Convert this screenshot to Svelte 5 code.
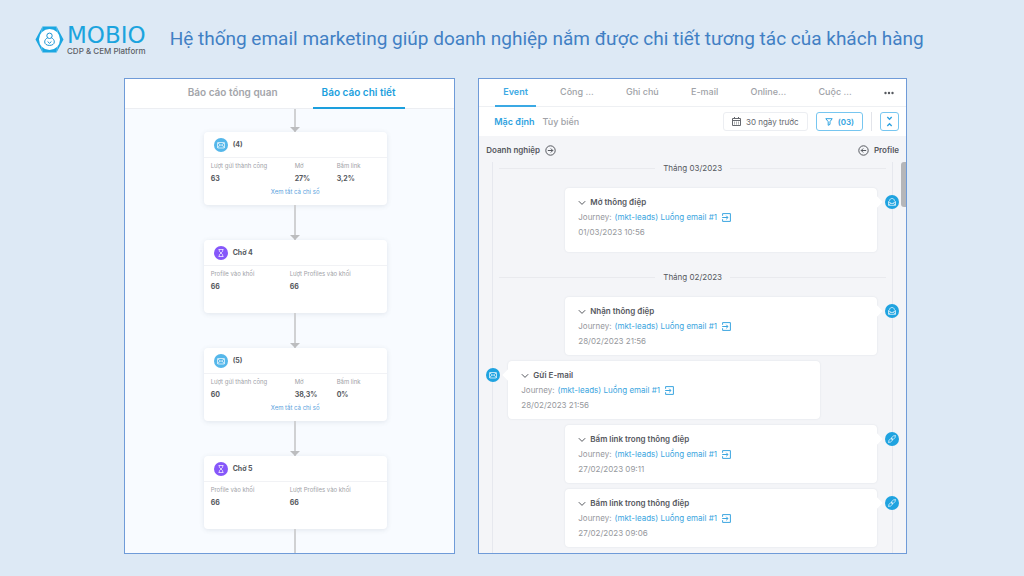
<script>
  const steps = [
    {
      kind: 'mail',
      name: '(4)',
      stats: [
        { label: 'Lượt gửi thành công', value: '63' },
        { label: 'Mở', value: '27%' },
        { label: 'Bấm link', value: '3,2%' },
      ],
    },
    {
      kind: 'wait',
      name: 'Chờ 4',
      stats: [
        { label: 'Profile vào khối', value: '66' },
        { label: 'Lượt Profiles vào khối', value: '66' },
      ],
    },
    {
      kind: 'mail',
      name: '(5)',
      stats: [
        { label: 'Lượt gửi thành công', value: '60' },
        { label: 'Mở', value: '38,3%' },
        { label: 'Bấm link', value: '0%' },
      ],
    },
    {
      kind: 'wait',
      name: 'Chờ 5',
      stats: [
        { label: 'Profile vào khối', value: '66' },
        { label: 'Lượt Profiles vào khối', value: '66' },
      ],
    },
  ];

  const reportTabs = ['Báo cáo tổng quan', 'Báo cáo chi tiết'];
  const profileTabs = ['Event', 'Công ...', 'Ghi chú', 'E-mail', 'Online...', 'Cuộc ...'];

  const journey = '(mkt-leads) Luồng email #1';

  const months = [
    {
      label: 'Tháng 03/2023',
      events: [
        { title: 'Mở thông điệp', time: '01/03/2023 10:56', side: 'profile', icon: 'open', tall: true },
      ],
    },
    {
      label: 'Tháng 02/2023',
      events: [
        { title: 'Nhận thông điệp', time: '28/02/2023 21:56', side: 'profile', icon: 'open' },
        { title: 'Gửi E-mail', time: '28/02/2023 21:56', side: 'business', icon: 'mail' },
        { title: 'Bấm link trong thông điệp', time: '27/02/2023 09:11', side: 'profile', icon: 'link' },
        { title: 'Bấm link trong thông điệp', time: '27/02/2023 09:06', side: 'profile', icon: 'link' },
      ],
    },
  ];

  let reportTab = $state('Báo cáo chi tiết');
  let profileTab = $state('Event');
  let view = $state('Mặc định');
</script>

{#snippet glyph(name)}
  <svg class="glyph" viewBox="0 0 14 14" aria-hidden="true">
    {#if name === 'mail'}
      <rect x="3.5" y="4.5" width="7" height="5.5" rx="0.6" />
      <path d="M3.7 4.8 7 7.5l3.3-2.7M3.7 9.8l2.2-2.9M10.3 9.8 8.1 6.9" />
    {:else if name === 'wait'}
      <path d="M4.5 3.5h5M4.5 10.5h5M5.3 3.5v1.7L7 7 5.3 8.8v1.7M8.7 3.5v1.7L7 7l1.7 1.8v1.7" />
    {:else if name === 'open'}
      <path d="M3.5 10.3V6.8L4.6 5.5C4.8 4.2 5.7 3.5 7 3.5s2.2.7 2.4 2l1.100 1.300v3.500zM3.600 6.900 7 8.700l3.400-1.800M3.700 10.100l2-2M10.300 10.100l-2-2" />
    {:else}
      <path d="M6.6 5.7 8.4 4a1.100 1.100 0 0 1 1.600 1.600L8.300 7.400a1.100 1.100 0 0 1-1.600 0zM7.400 8.300 5.600 10A1.100 1.100 0 0 1 4 8.400l1.700-1.800a1.100 1.100 0 0 1 1.600 0zM9.900 4.100l.9-.9M4.100 9.900l-.9.9" />
    {/if}
  </svg>
{/snippet}

<div class="page">
  <header>
    <div class="brand">
      <svg class="brand-mark" viewBox="0 0 29 27" aria-hidden="true">
        <path d="M7.5.5h14l7 13-7 13h-14l-7-13z" fill="#1ba7e2" />
        <path d="M7.5.5 5 13.500l2.500 13M21.500.5 24 13.500l-2.500 13" fill="none" stroke="#8fd2f1" stroke-width="0.6" />
        <circle cx="14.5" cy="13.5" r="10.5" fill="#fff" />
        <circle cx="14.5" cy="9.8" r="2.7" fill="none" stroke="#1b93d2" />
        <path d="M12.600 11.800c-1.900.9-2.900 2.400-2.900 4.100 0 2.200 2 3.500 4.800 3.500s4.800-1.300 4.800-3.500c0-1.700-1-3.200-2.900-4.100M12.600 15.500l1.900 1.800 1.900-1.800" fill="none" stroke="#1b93d2" />
      </svg>
      <div class="brand-text">
        <span class="brand-name">MOBIO</span>
        <span class="brand-sub">CDP &amp; CEM Platform</span>
      </div>
    </div>
    <h1>Hệ thống email marketing giúp doanh nghiệp nắm được chi tiết tương tác của khách hàng</h1>
  </header>

  <main>
    <section class="panel report">
      <nav class="report-tabs">
        {#each reportTabs as tab}
          <button class:active={reportTab === tab} onclick={() => (reportTab = tab)}>{tab}</button>
        {/each}
      </nav>

      <div class="flow">
        {#each steps as step}
          <div class="arrow"></div>
          <article class="step">
            <div class="step-head">
              <span class="dot {step.kind}">{@render glyph(step.kind)}</span>
              <strong>{step.name}</strong>
            </div>
            <dl class="stats {step.kind}">
              {#each step.stats as stat}
                <div>
                  <dt>{stat.label}</dt>
                  <dd>{stat.value}</dd>
                </div>
              {/each}
            </dl>
            {#if step.kind === 'mail'}
              <a class="all-stats" href="#stats">Xem tất cả chỉ số</a>
            {/if}
          </article>
        {/each}
        <div class="tail"></div>
      </div>
    </section>

    <section class="panel profile">
      <nav class="profile-tabs">
        {#each profileTabs as tab}
          <button class:active={profileTab === tab} onclick={() => (profileTab = tab)}>{tab}</button>
        {/each}
        <button class="more" aria-label="Thêm">
          <svg width="10" height="4" viewBox="0 0 10 4"><circle cx="1.5" cy="2" r="1.2" /><circle cx="5" cy="2" r="1.2" /><circle cx="8.5" cy="2" r="1.2" /></svg>
        </button>
      </nav>

      <div class="toolbar">
        {#each ['Mặc định', 'Tùy biến'] as v}
          <button class="view" class:active={view === v} onclick={() => (view = v)}>{v}</button>
        {/each}
        <button class="date">
          <svg width="9" height="9" viewBox="0 0 9 9" aria-hidden="true"><path d="M.5 1.5h8v7h-8zM.5 3.5h8M2.5 0v2M6.5 0v2" /><path stroke-dasharray="1 1" stroke-width="0.8" d="M2 5.2h5M2 6.9h5" /></svg>
          30 ngày trước
        </button>
        <button class="filter">
          <svg width="8" height="8" viewBox="0 0 8 8" aria-hidden="true"><path d="M.8.7h6.400L5 3.700v2.700L3.200 7.300V3.700z" /></svg>
          (03)
        </button>
        <span class="divider"></span>
        <button class="collapse" aria-label="Thu gọn">
          <svg width="7" height="11" viewBox="0 0 7 11"><path d="M1.300 1 3.500 3.200 5.700 1M1.300 10l2.200-2.200L5.700 10" /></svg>
        </button>
      </div>

      <div class="history">
        <div class="sides">
          <span>
            Doanh nghiệp
            <svg width="11" height="11" viewBox="0 0 11 11" aria-hidden="true"><circle cx="5.5" cy="5.5" r="4.7" /><path d="M2.800 5.500h5M5.800 3.500l2 2-2 2" /></svg>
          </span>
          <span>
            <svg width="11" height="11" viewBox="0 0 11 11" aria-hidden="true"><circle cx="5.5" cy="5.5" r="4.7" /><path d="M8.200 5.500h-5M5.200 3.500l-2 2 2 2" /></svg>
            Profile
          </span>
        </div>

        <div class="timeline">
          {#each months as month}
            <h2>{month.label}</h2>
            {#each month.events as event}
              <div class="event {event.side}">
                <article class:tall={event.tall}>
                  <h3>
                    <svg width="8" height="6" viewBox="0 0 8 6" aria-hidden="true"><path d="M.8 1.200 4 4.400l3.200-3.200" /></svg>
                    {event.title}
                  </h3>
                  <p>
                    Journey: <a href="#journey">{journey}<svg width="9" height="9" viewBox="0 0 9 9" aria-hidden="true"><path d="M.6 2.800V.6h7.800v7.800H.6V6.200M.2 4.500h5.600M4.200 2.700 6 4.500 4.200 6.300" /></svg></a>
                  </p>
                  <time>{event.time}</time>
                </article>
                <span class="dot {event.icon}">{@render glyph(event.icon)}</span>
              </div>
            {/each}
          {/each}
        </div>
        <div class="scrollbar"></div>
      </div>
    </section>
  </main>
</div>

<style>
  :global(body) {
    margin: 0;
    background: #dde9f5;
  }

  .page {
    min-height: 100vh;
    box-sizing: border-box;
    display: flex;
    flex-direction: column;
    padding-bottom: 22px;
    font-family: Inter, 'Noto Sans', sans-serif;
    color: #55585e;
  }

  button {
    padding: 0;
    border: 0;
    background: none;
    font: inherit;
    color: inherit;
    white-space: nowrap;
    cursor: pointer;
  }

  a {
    color: #3ba5e0;
    text-decoration: none;
  }

  h1, h2, h3, p, dl, dd {
    margin: 0;
    font-weight: inherit;
  }

  svg {
    flex: none;
    fill: none;
    stroke: currentColor;
  }

  header {
    display: flex;
    align-items: center;
    gap: 24px;
    height: 78px;
    padding: 0 35px;
  }

  .brand {
    display: flex;
    align-items: center;
    gap: 3px;
  }

  .brand-mark {
    width: 29px;
    height: 27px;
    stroke: none;
  }

  .brand-text {
    display: flex;
    flex-direction: column;
  }

  .brand-name {
    font-family: 'DejaVu Sans', sans-serif;
    font-size: 23px;
    line-height: 23px;
    color: #1ba4de;
  }

  .brand-sub {
    font-size: 8px;
    line-height: 8px;
    font-weight: 500;
    color: #5c5f66;
  }

  h1 {
    font-family: Roboto, sans-serif;
    font-size: 19px;
    line-height: 24px;
    color: #4180c4;
    white-space: nowrap;
  }

  main {
    flex: 1;
    display: flex;
    gap: 23px;
    padding: 0 117px 0 124px;
  }

  .panel {
    display: flex;
    flex-direction: column;
    min-width: 0;
    box-sizing: border-box;
    border: 1px solid #6f9bd8;
    background: #fff;
  }

  .report {
    flex: 331 1 0;
  }

  .profile {
    flex: 429 1 0;
  }

  .report-tabs {
    display: flex;
    justify-content: center;
    gap: 26px;
    height: 29px;
    padding-left: 4px;
    border-bottom: 1px solid #eceef2;
    font-size: 10px;
    font-weight: 600;
    color: #a3a5aa;
  }

  .report-tabs button {
    height: 30px;
    box-sizing: border-box;
    padding: 0 9px 2px;
    border-bottom: 2px solid transparent;
  }

  .report-tabs .active {
    color: #1c9fdd;
    border-color: #1c9fdd;
  }

  .flow {
    flex: 1;
    display: flex;
    flex-direction: column;
    align-items: center;
    padding-left: 11px;
    background: #f8fbff;
  }

  .arrow {
    position: relative;
    width: 2px;
    height: 35px;
    background: #d0d1d3;
  }

  .arrow:first-child {
    height: 23px;
  }

  .arrow::after {
    content: '';
    position: absolute;
    bottom: 0;
    left: -4px;
    border: 5px solid transparent;
    border-top: 5px solid #bcbdbf;
    border-bottom: 0;
  }

  .tail {
    flex: 1;
    width: 2px;
    min-height: 24px;
    background: #d0d1d3;
  }

  .step {
    width: 183px;
    height: 73px;
    border-radius: 4px;
    background: #fff;
    box-shadow: 0 1px 5px rgba(60, 70, 100, 0.12);
  }

  .step-head {
    display: flex;
    align-items: center;
    gap: 5px;
    height: 25px;
    padding-left: 10px;
    border-bottom: 1px solid #f1f2f5;
    font-size: 7px;
  }

  .dot {
    flex: none;
    display: flex;
    width: 14px;
    height: 14px;
    border-radius: 50%;
    background: #1fa3e0;
    color: #fff;
  }

  .step .dot.mail {
    background: #55b7ea;
  }

  .dot.wait {
    background: #8657fa;
  }

  .glyph {
    width: 14px;
    height: 14px;
    stroke-width: 0.7;
  }

  .stats {
    display: grid;
    grid-template-columns: 84px 42px auto;
    padding: 1px 7px 0;
  }

  .stats.wait {
    grid-template-columns: 79px auto;
  }

  dt {
    font-size: 6px;
    line-height: 13px;
    color: #a0a2a7;
    white-space: nowrap;
  }

  dd {
    font-size: 7px;
    line-height: 13px;
    font-weight: 700;
  }

  .all-stats {
    display: block;
    font-size: 6px;
    line-height: 13px;
    text-align: center;
    color: #5b9fdd;
  }

  .profile-tabs {
    display: flex;
    justify-content: space-between;
    height: 27px;
    padding: 0 4px 0 16px;
    border-bottom: 1px solid #eef0f3;
    font-size: 9px;
    font-weight: 500;
    color: #a0a2a7;
  }

  .profile-tabs button {
    height: 28px;
    box-sizing: border-box;
    padding: 0 8px 2px;
    border-bottom: 2px solid transparent;
  }

  .profile-tabs .active {
    font-weight: 600;
    color: #3ba9e4;
    border-color: #3ba9e4;
  }

  .profile-tabs .more {
    color: #55585e;
  }

  .more svg {
    fill: currentColor;
    stroke: none;
  }

  .toolbar {
    display: flex;
    align-items: center;
    gap: 8px;
    height: 29px;
    padding: 0 7px 0 15px;
    font-size: 8px;
  }

  .view {
    font-size: 9px;
    font-weight: 500;
    color: #a0a2a7;
  }

  .view.active {
    font-weight: 600;
    color: #2fa2e0;
  }

  .date, .filter, .collapse {
    display: flex;
    align-items: center;
    justify-content: center;
    gap: 5px;
    height: 19px;
    box-sizing: border-box;
    border: 1px solid #77c6f0;
    border-radius: 3px;
    color: #2fa2e0;
  }

  .date {
    margin-left: auto;
    padding: 0 8px;
    border-color: #eceef2;
    color: #66696f;
  }

  .filter {
    padding: 0 8px;
    font-weight: 600;
  }

  .collapse {
    width: 19px;
    stroke-width: 1.4;
  }

  .divider {
    width: 1px;
    height: 19px;
    background: #e2e4ea;
  }

  .history {
    position: relative;
    flex: 1;
    display: flex;
    flex-direction: column;
    padding: 0 7px;
    background: #f4f5f8;
  }

  .sides {
    display: flex;
    justify-content: space-between;
    height: 24px;
    padding-top: 2px;
    font-size: 8px;
    font-weight: 600;
  }

  .sides span {
    display: flex;
    align-items: center;
    gap: 5px;
  }

  .timeline {
    position: relative;
    flex: 1;
    padding-bottom: 6px;
    font-size: 8px;
    line-height: 15px;
  }

  .timeline::before {
    content: '';
    position: absolute;
    inset: 0 6px;
    border: solid #e6e8ee;
    border-width: 0 1px;
  }

  h2 {
    display: flex;
    align-items: center;
    gap: 8px;
    margin: 19px 0 14px;
    padding: 0 13px;
    font-size: 8px;
    line-height: 12px;
  }

  h2:first-child {
    margin-top: 0;
  }

  h2::before, h2::after {
    content: '';
    flex: 1;
    height: 1px;
    background: #e9eaee;
  }

  .event {
    position: relative;
    display: flex;
    gap: 8px;
    padding-left: 79px;
  }

  .event + .event {
    margin-top: 6px;
  }

  .event.business {
    flex-direction: row-reverse;
    padding: 0 79px 0 0;
  }

  .event article {
    position: relative;
    flex: 1;
    padding: 7px 13px 6px;
    border-radius: 4px;
    background: #fff;
    box-shadow: 0 0 2px rgba(60, 70, 100, 0.12);
  }

  .event article.tall {
    padding-bottom: 12px;
  }

  .event article::after {
    content: '';
    position: absolute;
    top: 10px;
    right: -4px;
    width: 8px;
    height: 8px;
    background: #fff;
    transform: rotate(45deg);
  }

  .event.business article::after {
    right: auto;
    left: -4px;
  }

  .event .dot {
    margin-top: 7px;
  }

  h3 {
    display: flex;
    align-items: center;
    gap: 4px;
    font-size: 8px;
    font-weight: 600;
  }

  p, time {
    display: block;
    color: #96989d;
  }

  p {
    display: flex;
    align-items: center;
    gap: 3px;
  }

  p a {
    display: flex;
    align-items: center;
    gap: 5px;
  }

  .scrollbar {
    position: absolute;
    top: 26px;
    right: 0;
    width: 5px;
    height: 45px;
    border-radius: 3px 0 0 3px;
    background: #b5b6b9;
  }
</style>
